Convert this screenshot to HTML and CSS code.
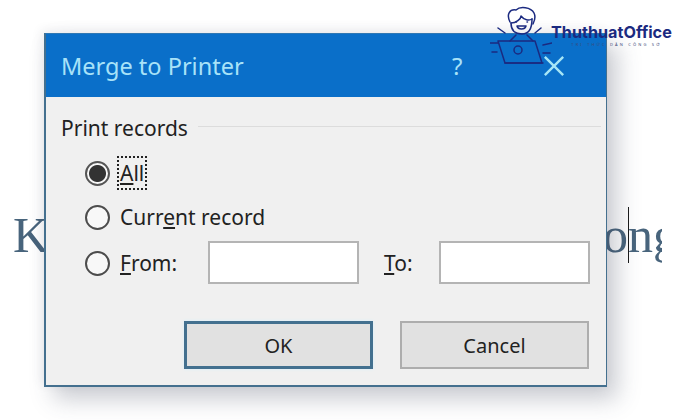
FILE: index.html
```html
<!DOCTYPE html>
<html>
<head>
<meta name="viewport" content="width=device-width, initial-scale=1">
<link rel="stylesheet" href="styles.css">
</head>
<body>
  <!-- Document text behind the dialog -->
  <div class="doc-line">
    <span>K</span>
    <span class="doc-end">ong<i class="caret"></i></span>
  </div>

  <!-- Merge to Printer dialog -->
  <div class="dialog">
    <div class="titlebar">
      <span class="title">Merge to Printer</span>
      <span class="help">?</span>
      <svg class="close" width="22" height="22" viewBox="0 0 24 24">
        <path d="M2 2 L22 22 M22 2 L2 22" stroke="#a6e6f6" stroke-width="2.6" fill="none"/>
      </svg>
    </div>
    <div class="content">
      <div class="group-head">
        <span>Print records</span>
        <i class="rule"></i>
      </div>
      <div class="row row-all">
        <span class="radio checked"></span>
        <span class="focus"><u>A</u>ll</span>
      </div>
      <div class="row row-current">
        <span class="radio"></span>
        <span class="label">Curr<u>e</u>nt record</span>
      </div>
      <div class="row row-range">
        <span class="radio"></span>
        <span class="label from"><u>F</u>rom:</span>
        <span class="field"></span>
        <span class="label to"><u>T</u>o:</span>
        <span class="field"></span>
      </div>
      <div class="buttons">
        <div class="btn btn-default">OK</div>
        <div class="btn">Cancel</div>
      </div>
    </div>
  </div>

  <!-- Logo over the corner of the dialog -->
  <div class="logo">
    <svg width="62" height="62" viewBox="0 0 62 62" fill="none" stroke="#1b2a80" stroke-width="1.5" stroke-linejoin="round" stroke-linecap="round">
      <path d="M20 16 C16 8 20 3 26 4 C30 0 41 1 44 7 C46 11 45 14 43 18"/>
      <path d="M21 17 C26 17 31 13 31 10 C34 14 39 15 42 13"/>
      <path d="M21 17 C21 24 25 28 32 28 C38 28 42 24 42 13"/>
      <path d="M27 20 C28 24 35 24 36 20 Z"/>
      <path d="M26 16 h.5 M37 16 h.5"/>
      <path d="M20 35 L26 29 M43 35 L37 29"/>
      <path d="M8 22 L15 27 M51 22 L45 27 M0 37 L8 37 M53 39 L62 37 M2 46 L7 46 M53 47 L60 47"/>
      <path d="M8 35 L45 35 L52 57 L15 57 Z"/>
      <path d="M15 57 L53 57"/>
      <circle cx="28" cy="44" r="4"/>
    </svg>
    <div class="logo-text">
      <div class="logo-name">ThuthuatOffice</div>
      <div class="logo-sub">TRI THỨC DÂN CÔNG SỞ</div>
    </div>
  </div>
</body>
</html>
```

FILE: styles.css
```css
html, body {
  margin: 0;
  height: 420px;
  overflow: hidden;
}

body {
  position: relative;
  background-color: #fff;
  font-family: "Noto Sans", "Open Sans", sans-serif;
  color: #222;
}

/* Background document line, runs under the dialog */
.doc-line {
  display: flex;
  justify-content: space-between;
  padding: 207px 20px 0 13px;
  height: 60px;
  font-family: "Liberation Serif", serif;
  font-size: 50px;
  line-height: 56px;
  color: #48647c;
}

.doc-end {
  position: relative;
  width: 59px;
  overflow: hidden;
}

.caret {
  position: absolute;
  left: 25px;
  top: 0;
  width: 1px;
  height: 56px;
  background-color: #1a1a1a;
}

/* Dialog window */
.dialog {
  position: absolute;
  left: 44px;
  top: 33px;
  width: 563px;
  height: 354px;
  box-sizing: border-box;
  border: 2px solid #44708f;
  border-top: 1px solid #2f78b4;
  border-right-width: 1px;
  background-color: #f0f0f0;
  box-shadow: 10px 12px 22px rgba(60, 70, 90, .28), -3px -3px 10px rgba(60, 70, 90, .08);
}

.titlebar {
  display: flex;
  align-items: center;
  height: 63px;
  padding-left: 15px;
  background-color: #0a6fc9;
  color: #a8e2f8;
}

.title {
  width: 391px;
  font-size: 23.5px;
}

.help {
  width: 91px;
  font-size: 24px;
}

.close {
  display: block;
}

.content {
  padding: 18px 5px 0 15px;
  font-size: 21px;
}

.group-head {
  display: flex;
  align-items: center;
  height: 26px;
}

.rule {
  flex: 1;
  height: 1px;
  margin: -4px 0 0 10px;
  background-color: #dcdcdc;
}

.row {
  display: flex;
  align-items: center;
  padding-left: 24px;
}

.row-all {
  height: 34px;
  margin-top: 15px;
}

.row-current {
  height: 34px;
  margin-top: 10px;
}

.row-range {
  height: 44px;
  margin-top: 7px;
}

.radio {
  width: 25px;
  height: 25px;
  box-sizing: border-box;
  flex: none;
  border: 2px solid #4c4c4c;
  border-radius: 50%;
  background-color: #f8f8f8;
}

.radio.checked {
  border-color: #555;
  background: radial-gradient(circle, #333 0 8px, #f8f8f8 9px);
}

.label {
  margin-left: 10px;
}

.focus {
  margin-left: 7px;
  padding: 0 1px;
  height: 30px;
  line-height: 30px;
  border: 2px dotted #222;
}

.from {
  width: 78px;
  margin-right: 10px;
}

.field {
  width: 151px;
  height: 43px;
  margin-top: -2px;
  box-sizing: border-box;
  border: 2px solid #b4b4b4;
  background-color: #fff;
}

.to {
  width: 55px;
  margin-left: 25px;
}

.buttons {
  display: flex;
  gap: 27px;
  margin: 36px 0 0 123px;
}

.btn {
  width: 189px;
  height: 48px;
  box-sizing: border-box;
  display: flex;
  align-items: center;
  justify-content: center;
  border: 2px solid #adadad;
  background-color: #e1e1e1;
  font-size: 20px;
}

.btn-default {
  border: 3px solid #43708f;
  box-shadow: 0 0 3px #d5effc;
}

/* Logo */
.logo {
  position: absolute;
  left: 490px;
  top: 6px;
  display: flex;
  align-items: flex-start;
}

.logo-text {
  margin: 17px 0 0 -1px;
}

.logo-name {
  font-family: "Inter", "Noto Sans", sans-serif;
  font-size: 16.2px;
  font-weight: 700;
  line-height: 18px;
  color: #1b2a80;
}

.logo-sub {
  padding-left: 10px;
  font-size: 4px;
  line-height: 8px;
  letter-spacing: 2.2px;
  text-align: center;
  color: #3c4a7a;
}
```
